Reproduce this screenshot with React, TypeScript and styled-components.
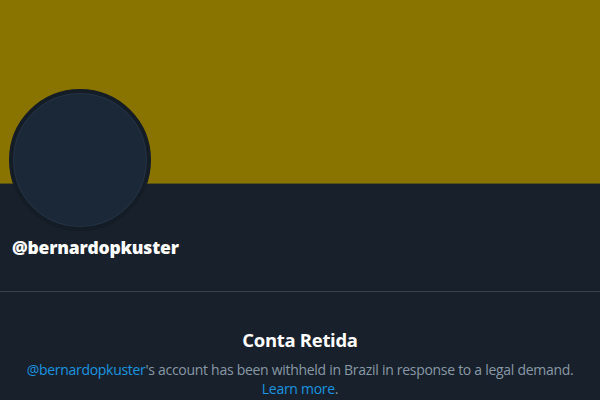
import React from "react";
import styled, { createGlobalStyle } from "styled-components";

const Global = createGlobalStyle`
  html, body { margin: 0; padding: 0; background: #18202b; }
  body { font-family: "Open Sans", "Noto Sans", sans-serif; }
  * { box-sizing: border-box; }
`;

const Page = styled.div`
  width: 600px;
  height: 400px;
  overflow: hidden;
  background: #18202b;
  display: flex;
  flex-direction: column;
`;

const Banner = styled.div`
  height: 184px;
  flex: none;
  background: #8a7400;
  border-bottom: 1px solid #5a5212;
`;

const Profile = styled.div`
  position: relative;
  padding: 52px 12px 0;
  height: 108px;
  border-bottom: 1px solid #38444d;
  flex: none;
`;

const Avatar = styled.div`
  position: absolute;
  left: 9px;
  top: -95px;
  width: 142px;
  height: 142px;
  border-radius: 50%;
  background: #1b2837;
  border: 4px solid #141c25;
  box-shadow: inset 0 0 0 1px #243445;
`;

const Handle = styled.div`
  font-family: "Open Sans", sans-serif;
  font-weight: 800;
  font-size: 17.5px;
  line-height: 22px;
  color: #ffffff;
  letter-spacing: -0.2px;
`;

const Notice = styled.div`
  display: flex;
  flex-direction: column;
  align-items: center;
  text-align: center;
  padding: 36px 20px 0;
`;

const Title = styled.div`
  font-family: "Open Sans", sans-serif;
  font-weight: 700;
  font-size: 18.5px;
  line-height: 24px;
  color: #ffffff;
  letter-spacing: -0.3px;
`;

const Body = styled.div`
  margin-top: 8px;
  font-size: 14px;
  line-height: 19px;
  color: #8899a6;
  letter-spacing: -0.29px;
`;

const Link = styled.a`
  color: #1b95e0;
  text-decoration: none;
`;

export default function App() {
  return (
    <>
      <Global />
      <Page>
        <Banner />
        <Profile>
          <Avatar />
          <Handle>@bernardopkuster</Handle>
        </Profile>
        <Notice>
          <Title>Conta Retida</Title>
          <Body>
            <Link>@bernardopkuster</Link>'s account has been withheld in Brazil in response to a legal demand.
            <br />
            <Link>Learn more</Link>.
          </Body>
        </Notice>
      </Page>
    </>
  );
}
